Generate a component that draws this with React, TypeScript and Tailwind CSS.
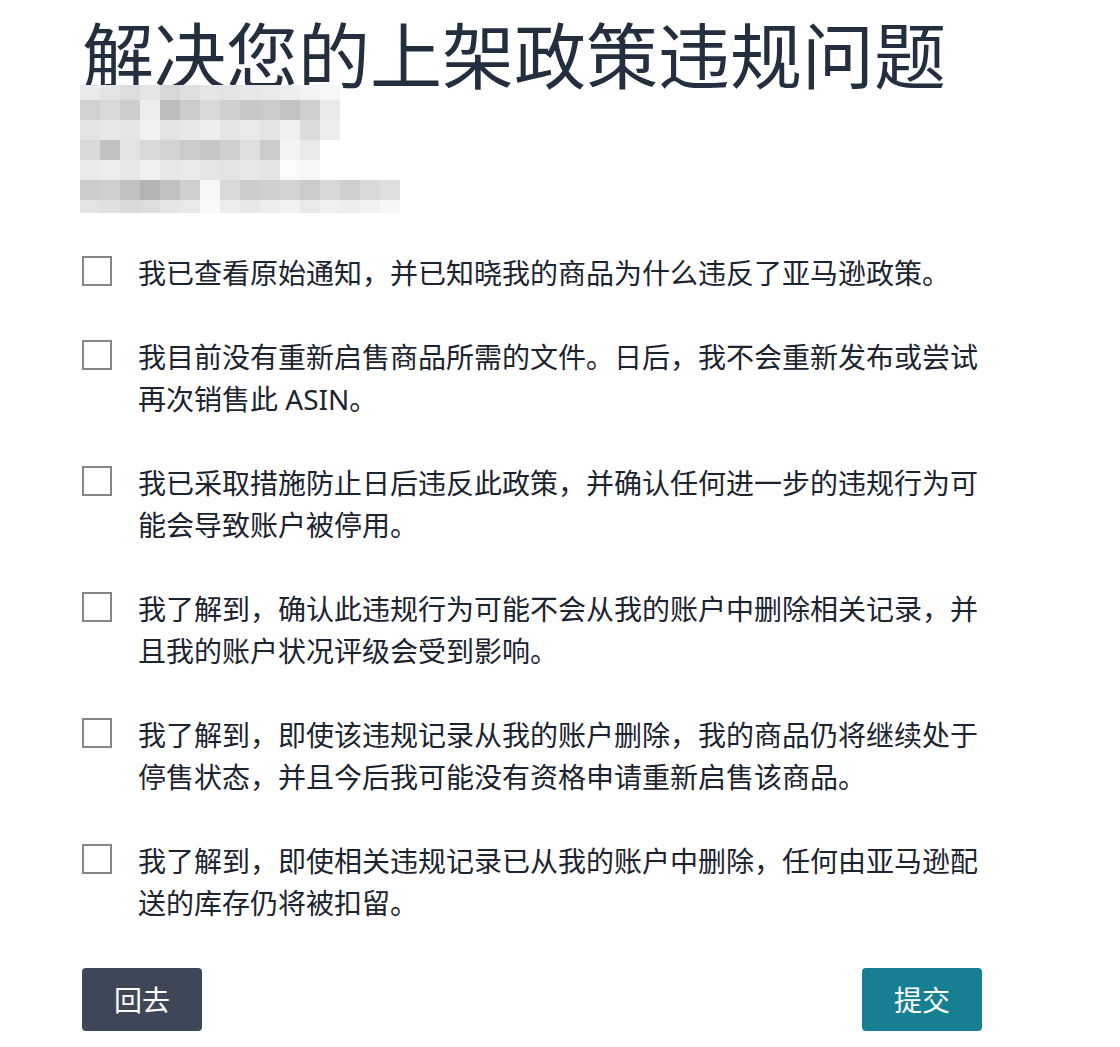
const ITEMS = [
  '我已查看原始通知，并已知晓我的商品为什么违反了亚马逊政策。',
  '我目前没有重新启售商品所需的文件。日后，我不会重新发布或尝试再次销售此 ASIN。',
  '我已采取措施防止日后违反此政策，并确认任何进一步的违规行为可能会导致账户被停用。',
  '我了解到，确认此违规行为可能不会从我的账户中删除相关记录，并且我的账户状况评级会受到影响。',
  '我了解到，即使该违规记录从我的账户删除，我的商品仍将继续处于停售状态，并且今后我可能没有资格申请重新启售该商品。',
  '我了解到，即使相关违规记录已从我的账户中删除，任何由亚马逊配送的库存仍将被扣留。',
]

// pixelated (redacted) block under the title, one row per band
const MOSAIC: { y: number; h: number; cells: number[] }[] = [
  { y: 0, h: 15, cells: [232, 226, 220, 228, 214, 222, 228, 226, 230, 232, 236, 242, 246] },
  { y: 15, h: 20, cells: [208, 216, 204, 236, 188, 202, 216, 206, 198, 202, 194, 206, 232] },
  { y: 35, h: 20, cells: [226, 230, 228, 240, 226, 230, 236, 228, 232, 226, 238, 218, 236] },
  { y: 55, h: 20, cells: [216, 192, 226, 216, 210, 202, 196, 206, 222, 202, 242, 232] },
  { y: 75, h: 20, cells: [232, 236, 230, 238, 230, 232, 228, 226, 230, 226, 250, 246] },
  { y: 95, h: 20, cells: [202, 206, 192, 178, 192, 206, 246, 216, 202, 206, 210, 202, 214, 206, 216, 222] },
  { y: 115, h: 13, cells: [226, 222, 216, 220, 228, 232, 248, 236, 230, 236, 240, 232, 238, 236, 240, 245] },
]

function Mosaic() {
  return (
    <svg width="320" height="128" viewBox="0 0 320 128" className="block -ml-[2px]">
      <defs>
        <filter id="soft">
          <feGaussianBlur stdDeviation="0.7" />
        </filter>
      </defs>
      <g filter="url(#soft)">
        {MOSAIC.map((row) =>
          row.cells.map((g, i) => (
            <rect
              key={`${row.y}-${i}`}
              x={i * 20}
              y={row.y}
              width="20"
              height={row.h}
              fill={`rgb(${g},${g + 1},${g + 3})`}
            />
          ))
        )}
      </g>
    </svg>
  )
}

export default function App() {
  return (
    <div className="min-h-[1047px] w-[1120px] bg-white font-['Noto_Sans','Noto_Sans_CJK_SC',sans-serif]">
      <div className="w-[900px] ml-[82px] pt-[23px]">
        <h1 className="text-[72px] leading-[64px] font-normal text-[#232f3e] tracking-normal">
          解决您的上架政策违规问题
        </h1>
        <div className="-mt-[2px]">
          <Mosaic />
        </div>

        {/* Acknowledgement checkboxes */}
        <div className="mt-[39px] flex flex-col gap-[42px]">
          {ITEMS.map((text) => (
            <label key={text} className="flex items-start gap-[26px] cursor-pointer">
              <span className="mt-[4px] w-[30px] h-[30px] shrink-0 border-2 border-[#878787] bg-white" />
              <span className="w-[844px] text-[28px] leading-[42px] text-[#1c2430]">{text}</span>
            </label>
          ))}
        </div>

        {/* Actions */}
        <div className="mt-[44px] flex justify-between">
          <button className="w-[120px] h-[63px] rounded-[4px] bg-[#3d4757] text-white text-[28px]">
            回去
          </button>
          <button className="w-[120px] h-[63px] rounded-[4px] bg-[#167f91] text-white text-[28px]">
            提交
          </button>
        </div>
      </div>
    </div>
  )
}
